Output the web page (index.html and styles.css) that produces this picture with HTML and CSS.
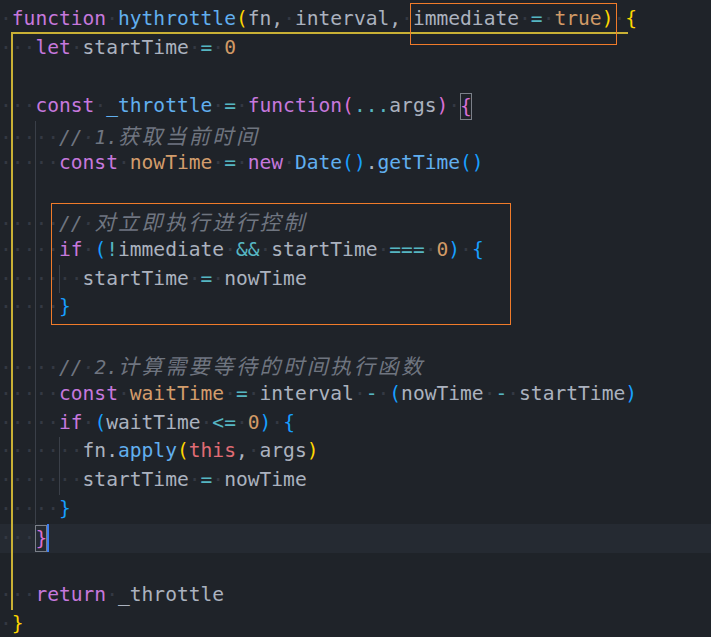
FILE: index.html
```html
<!DOCTYPE html>
<html lang="zh-CN">
<head>
    <meta charset="UTF-8">
    <title>hythrottle</title>
    <link rel="stylesheet" href="styles.css">
</head>
<body>
    <div class="editor">
        <div class="ln top"><span class="ws">·</span><span class="k">function</span><span class="ws">·</span><span class="f">hythrottle</span><span class="p1">(</span>fn,<span class="ws">·</span>interval,<span class="ws">·</span>immediate<span class="ws">·</span><span class="o">=</span><span class="ws">·</span><span class="n">true</span><span class="p1">)</span><span class="ws">·</span><span class="p1">{</span></div>

        <!-- 函数体 -->
        <div class="blk gy">
            <div class="ln"><span class="ws">···</span><span class="k">let</span><span class="ws">·</span>startTime<span class="ws">·</span><span class="o">=</span><span class="ws">·</span><span class="n">0</span></div>
            <div class="ln"></div>
            <div class="ln"><span class="ws">···</span><span class="k">const</span><span class="ws">·</span><span class="f">_throttle</span><span class="ws">·</span><span class="o">=</span><span class="ws">·</span><span class="k">function</span><span class="p2">(</span><span class="o">...</span>args<span class="p2">)</span><span class="ws">·</span><span class="p2 match">{</span></div>

            <div class="blk g3">
                <div class="ln"><span class="ws">·····</span><span class="c">//<span class="ws">·</span>1.<span class="cjk">获取当前时间</span></span></div>
                <div class="ln"><span class="ws">·····</span><span class="k">const</span><span class="ws">·</span><span class="v">nowTime</span><span class="ws">·</span><span class="o">=</span><span class="ws">·</span><span class="k">new</span><span class="ws">·</span><span class="f">Date</span><span class="p3">()</span>.<span class="f">getTime</span><span class="p3">()</span></div>
                <div class="ln"></div>
                <div class="ln"><span class="ws">·····</span><span class="c">//<span class="ws">·</span><span class="cjk">对立即执行进行控制</span></span></div>
                <div class="ln"><span class="ws">·····</span><span class="k">if</span><span class="ws">·</span><span class="p3">(</span><span class="o">!</span>immediate<span class="ws">·</span><span class="o">&amp;&amp;</span><span class="ws">·</span>startTime<span class="ws">·</span><span class="o">===</span><span class="ws">·</span><span class="n">0</span><span class="p3">)</span><span class="ws">·</span><span class="p3">{</span></div>
                <div class="blk g5">
                    <div class="ln"><span class="ws">·······</span>startTime<span class="ws">·</span><span class="o">=</span><span class="ws">·</span>nowTime</div>
                </div>
                <div class="ln"><span class="ws">·····</span><span class="p3">}</span></div>
                <div class="ln"></div>
                <div class="ln"><span class="ws">·····</span><span class="c">//<span class="ws">·</span>2.<span class="cjk">计算需要等待的时间执行函数</span></span></div>
                <div class="ln"><span class="ws">·····</span><span class="k">const</span><span class="ws">·</span><span class="v">waitTime</span><span class="ws">·</span><span class="o">=</span><span class="ws">·</span>interval<span class="ws">·</span><span class="o">-</span><span class="ws">·</span><span class="p3">(</span>nowTime<span class="ws">·</span><span class="o">-</span><span class="ws">·</span>startTime<span class="p3">)</span></div>
                <div class="ln"><span class="ws">·····</span><span class="k">if</span><span class="ws">·</span><span class="p3">(</span>waitTime<span class="ws">·</span><span class="o">&lt;=</span><span class="ws">·</span><span class="n">0</span><span class="p3">)</span><span class="ws">·</span><span class="p3">{</span></div>
                <div class="blk g5">
                    <div class="ln"><span class="ws">·······</span>fn.<span class="f">apply</span><span class="p1">(</span><span class="t">this</span>,<span class="ws">·</span>args<span class="p1">)</span></div>
                    <div class="ln"><span class="ws">·······</span>startTime<span class="ws">·</span><span class="o">=</span><span class="ws">·</span>nowTime</div>
                </div>
                <div class="ln"><span class="ws">·····</span><span class="p3">}</span></div>
            </div>

            <div class="ln cur"><span class="ws">···</span><span class="p2 match">}</span><span class="cursor"></span></div>
            <div class="ln"></div>
            <div class="ln"><span class="ws">···</span><span class="k">return</span><span class="ws">·</span>_throttle</div>
        </div>

        <div class="ln"><span class="ws">·</span><span class="p1">}</span></div>

        <!-- 标注框 -->
        <div class="mark mark-param"></div>
        <div class="mark mark-block"></div>
    </div>
</body>
</html>
```

FILE: styles.css
```css
:root {
    --bg: #1f2329;
    --line-bg: #252a32;
    --guide: #3a3f48;
    --guide-active: #c9b035;
    --mark: #f07b2a;
}

* {
    box-sizing: border-box;
    margin: 0;
    padding: 0;
}

body {
    background: var(--bg);
}

.editor {
    position: relative;
    height: 637px;
    overflow: hidden;
    padding-top: 5.4px;
    font-family: "DejaVu Sans Mono", "Liberation Mono", monospace;
    font-size: 19.6px;
    color: #abb2bf;
}

.ln {
    height: 28.8px;
    line-height: 28.8px;
    white-space: pre;
}

/* 缩进参考线 */
.gy {
    background: linear-gradient(var(--guide-active), var(--guide-active)) 10.5px 0 / 2px 100% no-repeat;
}

.g3 {
    background: linear-gradient(var(--guide), var(--guide)) 35px 0 / 1px 100% no-repeat;
}

.g5 {
    background: linear-gradient(var(--guide), var(--guide)) 59px 0 / 1px 100% no-repeat;
}

.top {
    background: linear-gradient(var(--guide-active), var(--guide-active)) 10.5px 100% / 617px 2px no-repeat;
}

.cur {
    background: linear-gradient(var(--guide-active), var(--guide-active)) 10.5px 0 / 2px 100% no-repeat, var(--line-bg);
}

/* 语法高亮 */
.ws { color: #343943; }
.k { color: #c678dd; }
.f { color: #61afef; }
.o { color: #56b6c2; }
.n { color: #d19a66; }
.v { color: #d39d6c; }
.t { color: #e06c75; }
.p1 { color: #ffd700; }
.p2 { color: #da70d6; }
.p3 { color: #179fff; }

.c {
    color: #6f7580;
    font-style: italic;
}

.c .ws { color: #343943; }

.cjk {
    font-family: "Noto Sans CJK SC", sans-serif;
    font-size: 21px;
    letter-spacing: 2.6px;
}

.match {
    display: inline-block;
    height: 27px;
    line-height: 27px;
    margin-top: 1px;
    vertical-align: top;
    box-shadow: inset 0 0 0 1px #7b8089;
}

.cursor {
    display: inline-block;
    width: 2px;
    height: 28px;
    vertical-align: top;
    background: #3d7ef0;
}

/* 标注 */
.mark {
    position: absolute;
    border: 1.5px solid var(--mark);
}

.mark-param {
    left: 410px;
    top: 3px;
    width: 207px;
    height: 42px;
}

.mark-block {
    left: 51px;
    top: 203px;
    width: 460px;
    height: 122px;
}
```
